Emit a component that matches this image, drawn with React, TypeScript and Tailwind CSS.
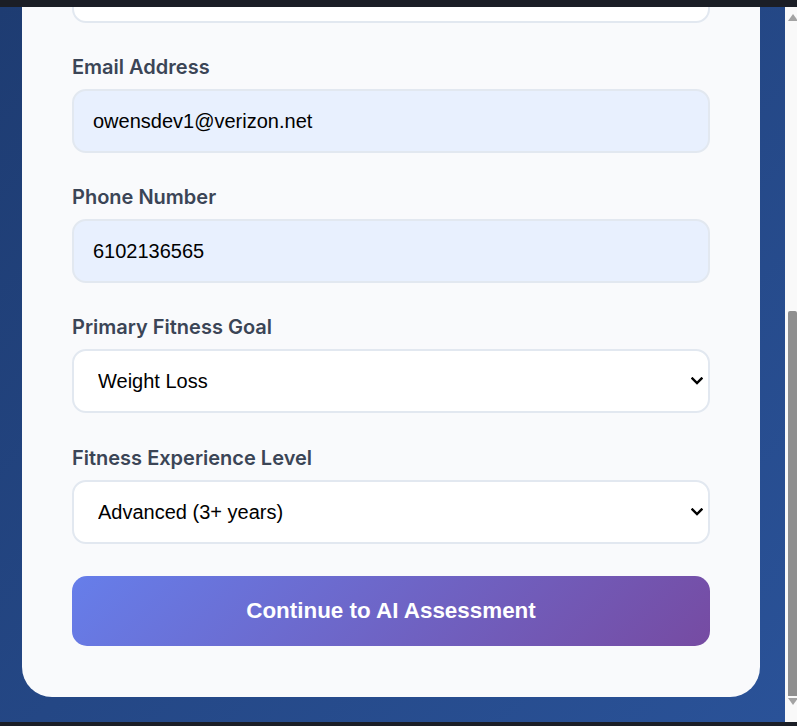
import { useState } from "react";

const labelCls =
  "block mb-2 text-[20px] leading-[27px] font-semibold text-[#3b4556] font-['Inter',sans-serif]";
const fieldCls =
  "block w-full h-16 rounded-[14px] border-2 border-[#e2e8f0] text-[20px] text-black font-['Liberation_Sans',Arial,sans-serif] outline-none";

// Classic 15px scrollbar, cropped to the 12px that fits the window.
function Scrollbar() {
  return (
    <div className="w-[12px] overflow-hidden bg-[#f9f9f9]">
      <div className="flex h-full w-[15px] flex-col">
        <div className="flex h-[17px] items-start justify-center pt-[7px]">
          <svg width="10" height="7" viewBox="0 0 10 7">
            <path d="M5 0 10 7H0z" fill="#a3a3a3" />
          </svg>
        </div>
        <div className="flex-1" />
        <div className="mx-[3px] h-[385px] rounded-t-[2px] bg-[#8f8f8f]" />
        <div className="flex h-[26px] items-start justify-center pt-[2px]">
          <svg width="10" height="7" viewBox="0 0 10 7">
            <path d="M0 0h10L5 7z" fill="#a3a3a3" />
          </svg>
        </div>
      </div>
    </div>
  );
}

function Select({
  defaultValue,
  options,
}: {
  defaultValue: string;
  options: [string, string][];
}) {
  return (
    <div className="relative">
      <select
        className={`${fieldCls} appearance-none bg-white pl-6 pr-10`}
        defaultValue={defaultValue}
      >
        {options.map(([value, label]) => (
          <option key={value} value={value}>
            {label}
          </option>
        ))}
      </select>
      <svg
        className="pointer-events-none absolute right-[7px] top-1/2 -translate-y-1/2"
        width="12"
        height="8"
        viewBox="0 0 12 8"
      >
        <path
          d="M1.5 1.5 6 6l4.5-4.5"
          fill="none"
          stroke="#000"
          strokeWidth="2.4"
          strokeLinecap="square"
        />
      </svg>
    </div>
  );
}

export default function App() {
  const [email, setEmail] = useState("owensdev1@verizon.net");
  const [phone, setPhone] = useState("6102136565");

  return (
    <div className="flex h-[726px] w-[797px] flex-col overflow-hidden bg-[#1b1e26]">
      <div className="h-[7px] shrink-0 bg-[#1b1e26]" />
      <div className="flex min-h-0 flex-1">
        <main className="min-w-0 flex-1 overflow-hidden bg-[linear-gradient(135deg,#1e3c72,#2a5298)] pb-[25px] pl-[22px] pr-[25px]">
          <div className="flex h-full flex-col justify-end overflow-hidden rounded-b-[30px] bg-[#f9fafc] px-[50px] pb-[51px]">
            <form onSubmit={(e) => e.preventDefault()}>
              {/* Full Name field, scrolled mostly out of view */}
              <div className="mb-[31px]">
                <input className={`${fieldCls} bg-white px-5`} defaultValue="" aria-label="Full Name" />
              </div>

              <div className="mb-[31px]">
                <label className={labelCls}>Email Address</label>
                <input
                  type="email"
                  value={email}
                  onChange={(e) => setEmail(e.target.value)}
                  className={`${fieldCls} bg-[#e8f0fe] pl-[19px] pr-5`}
                />
              </div>

              <div className="mb-[31px]">
                <label className={labelCls}>Phone Number</label>
                <input
                  type="tel"
                  value={phone}
                  onChange={(e) => setPhone(e.target.value)}
                  className={`${fieldCls} bg-[#e8f0fe] pl-[19px] pr-5`}
                />
              </div>

              <div className="mb-[32px]">
                <label className={labelCls}>Primary Fitness Goal</label>
                <Select
                  defaultValue="weight"
                  options={[
                    ["weight", "Weight Loss"],
                    ["muscle", "Muscle Gain"],
                    ["endurance", "Endurance"],
                  ]}
                />
              </div>

              <div className="mb-[32px]">
                <label className={labelCls}>Fitness Experience Level</label>
                <Select
                  defaultValue="advanced"
                  options={[
                    ["beginner", "Beginner (0-1 years)"],
                    ["intermediate", "Intermediate (1-3 years)"],
                    ["advanced", "Advanced (3+ years)"],
                  ]}
                />
              </div>

              <button
                type="submit"
                className="block h-[70px] w-full rounded-[15px] bg-[linear-gradient(135deg,#667eea,#764ba2)] text-[22.4px] font-bold text-white font-['Liberation_Sans',Arial,sans-serif]"
              >
                Continue to AI Assessment
              </button>
            </form>
          </div>
        </main>
        <Scrollbar />
      </div>
      <div className="h-[4px] shrink-0 bg-[#1b1e26]" />
    </div>
  );
}
